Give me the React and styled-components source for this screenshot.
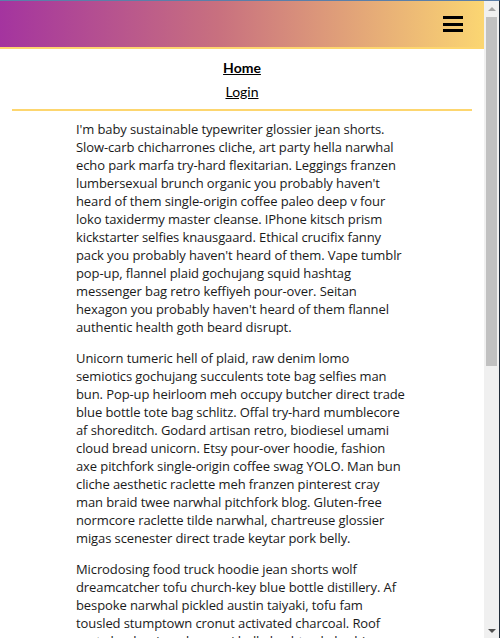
import React from 'react'
import styled, { createGlobalStyle } from 'styled-components'

const paragraphs = [
  "I'm baby sustainable typewriter glossier jean shorts. Slow-carb chicharrones cliche, art party hella narwhal echo park marfa try-hard flexitarian. Leggings franzen lumbersexual brunch organic you probably haven't heard of them single-origin coffee paleo deep v four loko taxidermy master cleanse. IPhone kitsch prism kickstarter selfies knausgaard. Ethical crucifix fanny pack you probably haven't heard of them. Vape tumblr pop-up, flannel plaid gochujang squid hashtag messenger bag retro keffiyeh pour-over. Seitan hexagon you probably haven't heard of them flannel authentic health goth beard disrupt.",
  "Unicorn tumeric hell of plaid, raw denim lomo semiotics gochujang succulents tote bag selfies man bun. Pop-up heirloom meh occupy butcher direct trade blue bottle tote bag schlitz. Offal try-hard mumblecore af shoreditch. Godard artisan retro, biodiesel umami cloud bread unicorn. Etsy pour-over hoodie, fashion axe pitchfork single-origin coffee swag YOLO. Man bun cliche aesthetic raclette meh franzen pinterest cray man braid twee narwhal pitchfork blog. Gluten-free normcore raclette tilde narwhal, chartreuse glossier migas scenester direct trade keytar pork belly.",
  "Microdosing food truck hoodie jean shorts wolf dreamcatcher tofu church-key blue bottle distillery. Af bespoke narwhal pickled austin taiyaki, tofu fam tousled stumptown cronut activated charcoal. Roof party banh mi cred umami hella hashtag kale chips craft beer. Tacos vinyl lyft, sriracha fingerstache wayfarers bitters four dollar toast.",
]

const GlobalStyle = createGlobalStyle`
  html, body {
    margin: 0;
    padding: 0;
    background: #fff;
    overflow: hidden;
  }
  body {
    border-top: 1px solid #5b7fa9;
    border-right: 1px solid #1e2a38;
    font-family: "Open Sans", "Liberation Sans", sans-serif;
    color: #1a1a1a;
  }
`

const Frame = styled.div`
  display: flex;
  height: calc(100vh - 1px);
`

const Page = styled.div`
  flex: 1;
  min-width: 0;
  overflow: hidden;
`

/* the window's scrollbar, drawn since the page is photographed without one */
const ScrollBar = styled.div`
  width: 15px;
  flex: none;
  display: flex;
  flex-direction: column;
  align-items: center;
  background: #f0f0f0;
`

const Arrow = styled.div`
  height: 15px;
  display: flex;
  align-items: center;
  justify-content: center;

  &::before {
    content: '';
    border-left: 4px solid transparent;
    border-right: 4px solid transparent;
    ${p =>
      p.$down
        ? `border-top: 4px solid #505050;`
        : `border-bottom: 4px solid #a3a3a3;`}
  }
`

const Thumb = styled.div`
  width: 11px;
  height: 349px;
  margin-top: 1px;
  background: #c1c1c1;
`

const Track = styled.div`
  flex: 1;
`

const Header = styled.header`
  height: 46px;
  display: flex;
  align-items: center;
  justify-content: flex-end;
  padding: 0 21px;
  background: linear-gradient(90deg, #a4349f 0%, #c8707f 45%, #fbd672 100%);
  border-bottom: 2px solid #fdd66f;
`

const Burger = styled.button`
  width: 20px;
  height: 16px;
  padding: 0;
  border: 0;
  background: none;
  display: flex;
  flex-direction: column;
  justify-content: space-between;
  cursor: pointer;

  span {
    display: block;
    height: 3px;
    background: #000;
  }
`

const Nav = styled.nav`
  display: flex;
  flex-direction: column;
  align-items: center;
  gap: 5px;
  padding: 9px 12px 0;
  font-family: Lato, "Liberation Sans", sans-serif;
  font-size: 14px;
  line-height: 19px;
`

const NavLink = styled.a`
  color: #000;
  text-decoration: underline;
  font-weight: ${p => (p.$active ? 700 : 400)};
`

const Rule = styled.hr`
  margin: 8px 12px 0;
  border: 0;
  height: 2px;
  background: #fdd66f;
`

const Article = styled.main`
  max-width: 332px;
  margin: 0 auto;
  padding-top: 9px;
  font-size: 13px;
  line-height: 18px;
  letter-spacing: -0.1px;

  p {
    margin: 0 0 13px;
  }
`

const App = () => {
  return (
    <>
      <GlobalStyle />
      <Frame>
        <Page>
          <Header>
            <Burger aria-label="menu">
              <span />
              <span />
              <span />
            </Burger>
          </Header>
          <Nav>
            <NavLink href="#" $active>Home</NavLink>
            <NavLink href="#">Login</NavLink>
          </Nav>
          <Rule />
          <Article>
            {paragraphs.map((text, i) => (
              <p key={i}>{text}</p>
            ))}
          </Article>
        </Page>
        <ScrollBar>
          <Arrow />
          <Thumb />
          <Track />
          <Arrow $down />
        </ScrollBar>
      </Frame>
    </>
  )
}

export default App
